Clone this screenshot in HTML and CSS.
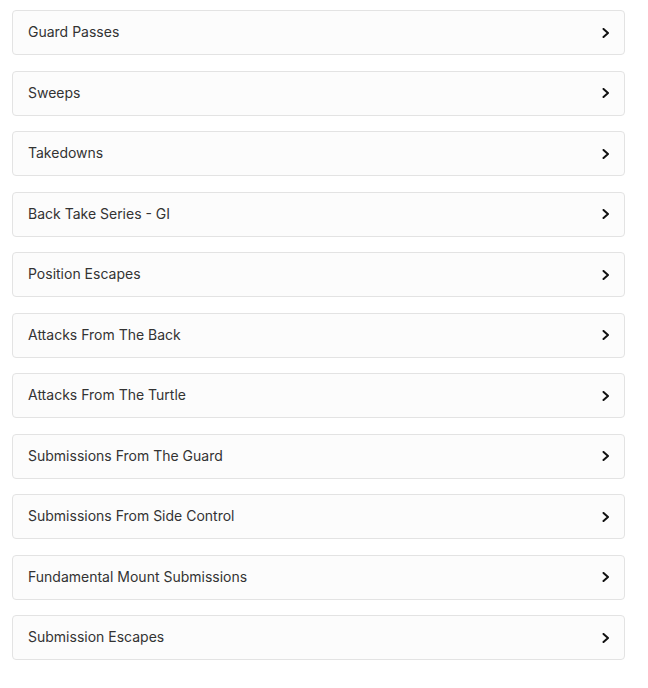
FILE: index.html
```html
<!DOCTYPE html>
<html lang="en">
<head>
<meta charset="utf-8">
<title>Categories</title>
<link rel="stylesheet" href="styles.css">
</head>
<body>
<ul class="list">
  <li class="item"><span class="label">Guard Passes</span><svg class="chev" viewBox="0 0 8 10" width="8" height="10"><path d="M1.5 1 L6 5 L1.5 9"/></svg></li>
  <li class="item"><span class="label">Sweeps</span><svg class="chev" viewBox="0 0 8 10" width="8" height="10"><path d="M1.5 1 L6 5 L1.5 9"/></svg></li>
  <li class="item"><span class="label">Takedowns</span><svg class="chev" viewBox="0 0 8 10" width="8" height="10"><path d="M1.5 1 L6 5 L1.5 9"/></svg></li>
  <li class="item"><span class="label">Back Take Series - GI</span><svg class="chev" viewBox="0 0 8 10" width="8" height="10"><path d="M1.5 1 L6 5 L1.5 9"/></svg></li>
  <li class="item"><span class="label">Position Escapes</span><svg class="chev" viewBox="0 0 8 10" width="8" height="10"><path d="M1.5 1 L6 5 L1.5 9"/></svg></li>
  <li class="item"><span class="label">Attacks From The Back</span><svg class="chev" viewBox="0 0 8 10" width="8" height="10"><path d="M1.5 1 L6 5 L1.5 9"/></svg></li>
  <li class="item"><span class="label">Attacks From The Turtle</span><svg class="chev" viewBox="0 0 8 10" width="8" height="10"><path d="M1.5 1 L6 5 L1.5 9"/></svg></li>
  <li class="item"><span class="label">Submissions From The Guard</span><svg class="chev" viewBox="0 0 8 10" width="8" height="10"><path d="M1.5 1 L6 5 L1.5 9"/></svg></li>
  <li class="item"><span class="label">Submissions From Side Control</span><svg class="chev" viewBox="0 0 8 10" width="8" height="10"><path d="M1.5 1 L6 5 L1.5 9"/></svg></li>
  <li class="item"><span class="label">Fundamental Mount Submissions</span><svg class="chev" viewBox="0 0 8 10" width="8" height="10"><path d="M1.5 1 L6 5 L1.5 9"/></svg></li>
  <li class="item"><span class="label">Submission Escapes</span><svg class="chev" viewBox="0 0 8 10" width="8" height="10"><path d="M1.5 1 L6 5 L1.5 9"/></svg></li>
</ul>
</body>
</html>
```
FILE: styles.css
```css
html, body {
  margin: 0;
  padding: 0;
  background: #ffffff;
}
body {
  font-family: "Inter", "Noto Sans", sans-serif;
  color: #333333;
}
.list {
  list-style: none;
  margin: 0;
  padding: 10px 0 0 12px;
  width: 613px;
  display: flex;
  flex-direction: column;
  gap: 15.5px;
}
.item {
  box-sizing: border-box;
  height: 45px;
  display: flex;
  align-items: center;
  justify-content: space-between;
  padding: 0 14px 0 15px;
  background: #fcfcfc;
  border: 1px solid #e3e3e3;
  border-radius: 4px;
}
.label {
  font-size: 14px;
  line-height: 20px;
  margin-top: -1px;
}
.chev {
  display: block;
  fill: none;
  stroke: #111111;
  stroke-width: 2;
  stroke-linecap: round;
  stroke-linejoin: round;
}
```
